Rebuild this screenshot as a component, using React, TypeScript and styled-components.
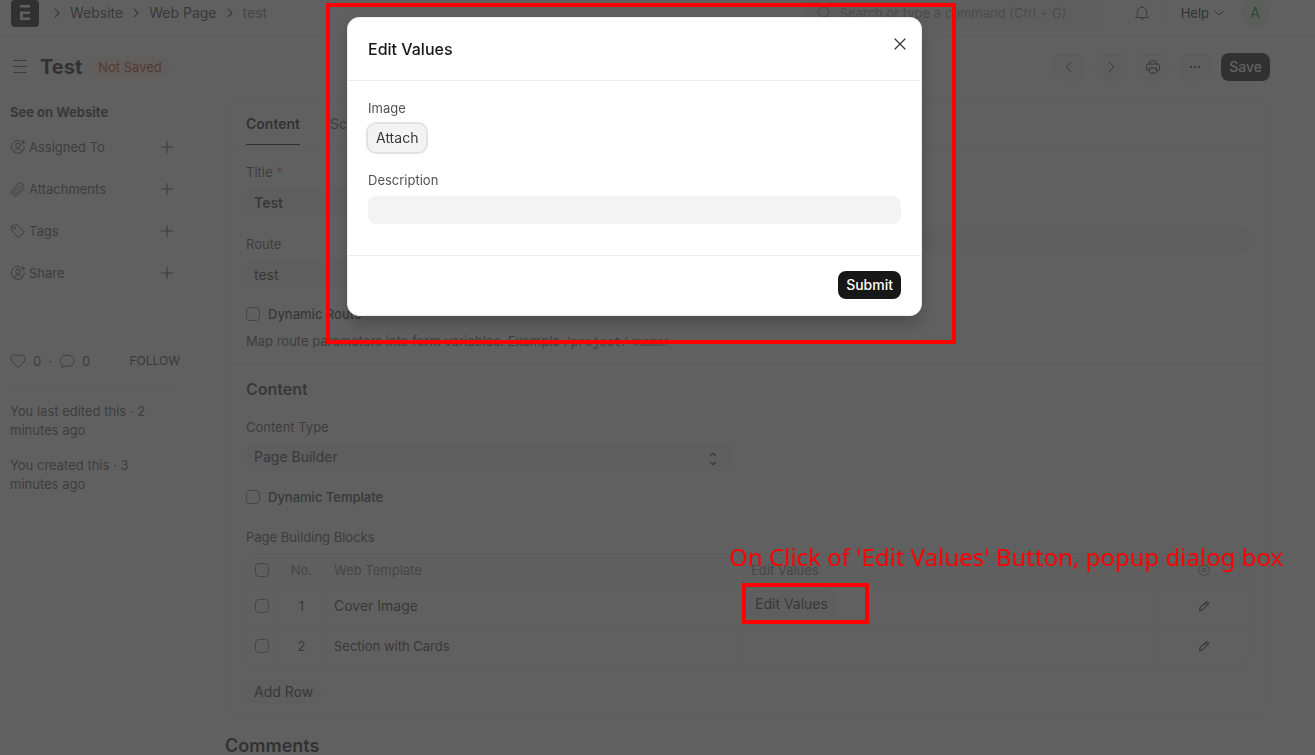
import React from "react";
import styled, { createGlobalStyle, css } from "styled-components";

const color = {
  ink: "#171717",
  text: "#383838",
  label: "#525252",
  muted: "#7c7c7c",
  faint: "#999999",
  line: "#ededed",
  control: "#f3f3f3",
  mark: "#ff0000",
};

const GlobalStyle = createGlobalStyle`
  *, *::before, *::after { box-sizing: border-box; }
  body {
    margin: 0;
    background: #ffffff;
    color: ${color.text};
    font-family: Inter, "Liberation Sans", sans-serif;
    font-size: 13px;
    line-height: 20px;
  }
  button, input, select { font: inherit; color: inherit; margin: 0; }
  button { border: 0; padding: 0; background: none; cursor: pointer; }
  a { color: inherit; text-decoration: none; }
  svg { display: block; flex: none; }
`;

/* ---------- icons ---------- */

type StrokeProps = { size?: number; width?: number; box?: number; children: React.ReactNode };

const Stroke = ({ size = 16, width = 1, box = 16, children }: StrokeProps) => (
  <svg
    width={size}
    height={size}
    viewBox={`0 0 ${box} ${box}`}
    fill="none"
    stroke="currentColor"
    strokeWidth={width}
    strokeLinecap="round"
    strokeLinejoin="round"
    aria-hidden="true"
  >
    {children}
  </svg>
);

const ChevronRight = () => (
  <Stroke size={12} box={12} width={1.2}>
    <path d="M4.2 2.200 8 6 4.200 9.800" />
  </Stroke>
);
const ChevronLeft = () => (
  <Stroke>
    <path d="M10.300 3 5.300 8l5 5" />
  </Stroke>
);
const ChevronNext = () => (
  <Stroke>
    <path d="m5.900 3 5 5-5 5" />
  </Stroke>
);
const ChevronDown = () => (
  <Stroke size={12} box={12}>
    <path d="M2 4.200 6 8l4-3.800" />
  </Stroke>
);
const SearchIcon = () => (
  <Stroke>
    <circle cx="7.600" cy="7" r="5.200" />
    <path d="m11.500 10.800 2.600 2.800" />
  </Stroke>
);
const BellIcon = () => (
  <Stroke>
    <path d="M8 1v1.200M3.300 7A4.700 4.800 0 0 1 12.700 7v3l1.700 2.600H1.600L3.300 10ZM6.200 13a1.900 1.900 0 0 0 3.600 0" />
  </Stroke>
);
const MenuIcon = () => (
  <Stroke>
    <path d="M1.500 1.500h13M1.500 7.500h13M1.500 13.500h13" />
  </Stroke>
);
const PrinterIcon = () => (
  <Stroke>
    <path d="M4.500 5V3.200A1.200 1.200 0 0 1 5.700 2h4.600a1.200 1.200 0 0 1 1.200 1.200V5M4.500 11.500H3A1.500 1.500 0 0 1 1.500 10V6.800A1.800 1.800 0 0 1 3.300 5h9.400a1.800 1.800 0 0 1 1.800 1.800V10a1.500 1.500 0 0 1-1.500 1.500h-1.500" />
    <path d="M4.500 9h7v3.800a1.200 1.200 0 0 1-1.200 1.200H5.700a1.200 1.200 0 0 1-1.200-1.200Z" />
  </Stroke>
);
const DotsIcon = () => (
  <svg width="16" height="16" viewBox="0 0 16 16" fill="currentColor" aria-hidden="true">
    <rect x="3" y="7" width="2" height="2" rx="0.500" />
    <rect x="7" y="7" width="2" height="2" rx="0.500" />
    <rect x="11" y="7" width="2" height="2" rx="0.500" />
  </svg>
);
const AssignIcon = () => (
  <Stroke>
    <path d="M10 1.800A6.500 6.500 0 1 0 14.300 7.600" />
    <circle cx="8" cy="6.500" r="2.300" />
    <path d="M3.800 12.800a4.400 4.400 0 0 1 8.400 0M13 1.300v4M11 3.300h4" />
  </Stroke>
);
const ClipIcon = () => (
  <Stroke>
    <path d="m14.300 7.400-6 6.200a3.800 3.800 0 0 1-5.500-5.300l5.700-5.900a2.700 2.700 0 0 1 4 3.700l-5.700 5.900a1.500 1.500 0 0 1-2.200-2L9.700 4.800" />
  </Stroke>
);
const TagIcon = () => (
  <Stroke>
    <path d="M1.800 3.900v3.300c0 .5.200 1 .5 1.300l5.400 5.400a1.300 1.300 0 0 0 1.900 0l4-4a1.300 1.300 0 0 0 0-1.900L8.200 2.600c-.4-.3-.8-.5-1.300-.5H3.600a1.800 1.800 0 0 0-1.800 1.800Z" />
    <circle cx="4.800" cy="5.200" r="0.700" />
  </Stroke>
);
const PlusIcon = () => (
  <Stroke size={14} box={14} width={1.2}>
    <path d="M7 1.500v11M1.500 7h11" />
  </Stroke>
);
const HeartIcon = () => (
  <Stroke>
    <path d="M8 14.300 1.700 8.200A3.900 3.900 0 0 1 7.200 2.700l.8.800.8-.8a3.900 3.900 0 0 1 5.500 5.500Z" />
  </Stroke>
);
const CommentIcon = () => (
  <Stroke>
    <path d="M8.200 2.100c4 0 7 2.400 7 5.600s-3 5.600-7 5.600c-.8 0-1.600-.1-2.300-.3-.8.600-1.900 1.100-3.300 1.200.5-.7.800-1.400.800-2.400C2 10.800 1.200 9.300 1.200 7.700c0-3.200 3-5.600 7-5.600Z" />
  </Stroke>
);
const UpDownIcon = () => (
  <Stroke width={1.3}>
    <path d="M5.500 4.500 8 2.500l2.500 2M5.500 11.500 8 13.500l2.500-2" />
  </Stroke>
);
const GearIcon = () => (
  <Stroke size={14}>
    <circle cx="8" cy="8" r="2" />
    <path d="M8 1.200 9.500 2.900 11.700 2.300 12.200 4.500 14.300 5.200 13.700 7.400 15 9.200 13.200 10.600 13 12.900 10.700 12.900 9.200 14.700 7.300 13.400 5.100 14 4.400 11.900 2.200 11.300 2.700 9.100 1.100 7.500 2.800 6 2.900 3.700 5.200 3.500 6.200 1.600Z" />
  </Stroke>
);
const PencilIcon = () => (
  <Stroke size={12} width={1.6}>
    <path d="M1.800 14.200 2.600 10.600 10.800 2.400a1.200 1.200 0 0 1 1.700 0l1.100 1.100a1.200 1.200 0 0 1 0 1.700l-8.200 8.200ZM9.400 3.800l2.800 2.800" />
  </Stroke>
);
const CloseIcon = () => (
  <Stroke width={1.3}>
    <path d="m3 3 10 10M13 3 3 13" />
  </Stroke>
);

/* ---------- top bar ---------- */

const Page = styled.div`
  min-height: 100vh;
`;

const TopBar = styled.header`
  display: flex;
  align-items: center;
  justify-content: space-between;
  height: 37px;
  padding: 0 46px 10px 11px;
  border-bottom: 1px solid ${color.line};
`;

const Crumbs = styled.nav`
  display: flex;
  align-items: center;
  gap: 7px;
  font-size: 14px;
  color: ${color.text};
`;

const Logo = styled.a`
  display: block;
  width: 28px;
  height: 27px;
  margin-right: 5px;
  border-radius: 4px;
  background: ${color.ink};
`;

const CurrentCrumb = styled.span`
  color: ${color.muted};
`;

const Tools = styled.div`
  display: flex;
  align-items: center;
`;

const SearchBox = styled.label`
  display: flex;
  align-items: center;
  gap: 8px;
  width: 300px;
  height: 26px;
  padding: 0 12px;
  border-radius: 8px;
  background: ${color.control};
  color: ${color.muted};

  input {
    flex: 1;
    min-width: 0;
    padding: 0;
    border: 0;
    background: none;
    outline: 0;
  }
  input::placeholder { color: ${color.faint}; opacity: 1; }
`;

const BellButton = styled.button`
  margin: 0 15px 0 30px;
  color: ${color.label};
`;

const HelpButton = styled.button`
  display: flex;
  align-items: center;
  gap: 4px;
  height: 24px;
  margin-right: 16px;
  padding-left: 15px;
  border-left: 1px solid ${color.line};
  color: ${color.ink};
`;

const Avatar = styled.span`
  display: grid;
  place-items: center;
  width: 28px;
  height: 28px;
  border-radius: 50%;
  background: #e4faeb;
  color: #16794c;
  font-size: 14px;
`;

/* ---------- page head ---------- */

const PageHead = styled.div`
  display: flex;
  align-items: center;
  justify-content: space-between;
  padding: 16px 45px 0 12px;
`;

const HeadGroup = styled.div<{ $gap: number }>`
  display: flex;
  align-items: center;
  gap: ${(p) => p.$gap}px;
`;

const PageTitle = styled.h1`
  margin: 0;
  color: ${color.ink};
  font-size: 20px;
  font-weight: 700;
  line-height: 28px;
`;

const Status = styled.span`
  padding: 0 8px;
  border-radius: 10px;
  background: #fff1e7;
  color: #bd3e0c;
`;

const solid = css`
  background: ${color.ink};
  color: #ffffff;
`;
const subtle = css`
  background: ${color.control};
  color: ${color.text};
`;

const Button = styled.button<{ $primary?: boolean; $small?: boolean; $focused?: boolean }>`
  display: inline-flex;
  align-items: center;
  justify-content: center;
  height: ${(p) => (p.$small ? 24 : 28)}px;
  padding: 0 8px;
  border-radius: 8px;
  font-size: 14px;
  font-weight: ${(p) => (p.$primary ? 500 : 400)};
  ${(p) => (p.$primary ? solid : subtle)}
  ${(p) => p.$focused && "box-shadow: 0 0 0 2px #e2e2e2;"}
`;

const MenuButton = styled.button`
  color: ${color.label};
`;

/* ---------- sidebar ---------- */

const Body = styled.div`
  display: flex;
  gap: 45px;
  padding: 21px 45px 0 10px;
`;

const Sidebar = styled.aside`
  flex: none;
  width: 170px;
  color: ${color.label};
`;

const SiteLink = styled.a`
  display: block;
  margin-bottom: 14px;
  color: ${color.text};
  font-weight: 700;
`;

const SideItem = styled.div`
  display: flex;
  align-items: center;
  gap: 3px;
  height: 22px;
  margin-bottom: 20px;

  button { margin-left: auto; padding-right: 6px; }
`;

const Social = styled.div`
  display: flex;
  align-items: center;
  gap: 7px;
  margin-top: 67px;
  padding-bottom: 14px;
  border-bottom: 1px solid ${color.line};

  > button:last-child { margin-left: auto; color: ${color.text}; font-size: 12px; }
`;

const Count = styled.button`
  display: flex;
  align-items: center;
  gap: 7px;
`;

const Activity = styled.p`
  width: 150px;
  margin: 16px 0;
  line-height: 19px;
`;

/* ---------- form ---------- */

const Main = styled.main`
  flex: 1;
  min-width: 0;
`;

const Card = styled.div`
  border: 1px solid ${color.line};
  border-radius: 12px;
`;

const Tabs = styled.div`
  display: flex;
  gap: 30px;
  height: 43px;
  padding: 0 20px;
  border-bottom: 1px solid ${color.line};
`;

const Tab = styled.button<{ $active?: boolean }>`
  height: 42px;
  border-bottom: 1px solid ${(p) => (p.$active ? color.ink : "transparent")};
  color: ${(p) => (p.$active ? color.ink : color.label)};
  font-size: 14px;
  font-weight: ${(p) => (p.$active ? 600 : 400)};
`;

const Section = styled.section`
  padding: 16px 20px 0;

  & + & { margin-top: 13px; border-top: 1px solid ${color.line}; }
`;

const Columns = styled.div`
  display: grid;
  grid-template-columns: 1fr 1fr;
  gap: 30px;
`;

const SideColumn = styled.div`
  padding-top: 64px;
`;

const SectionTitle = styled.h2`
  margin: 0 0 20px;
  color: ${color.text};
  font-size: 16px;
  font-weight: 600;
  line-height: 16px;
`;

const Field = styled.div`
  display: flex;
  flex-direction: column;
  gap: 6px;

  & + & { margin-top: 18px; }
`;

const Label = styled.label`
  color: ${color.label};
  line-height: 20px;
`;

const Required = styled.span`
  color: #c97070;
`;

const TextInput = styled.input<{ $bold?: boolean }>`
  width: 100%;
  height: 28px;
  padding: 0 8px;
  border: 0;
  border-radius: 8px;
  background: ${color.control};
  font-size: 14px !important;
  font-weight: ${(p) => (p.$bold ? 600 : 400)} !important;
`;

const SelectWrap = styled.div`
  position: relative;

  select {
    display: block;
    width: 100%;
    height: 28px;
    padding: 0 8px;
    border: 0;
    border-radius: 8px;
    background: ${color.control};
    font-size: 14px;
    appearance: none;
  }
  svg { position: absolute; top: 8px; right: 12px; pointer-events: none; }
`;

const Check = styled.input`
  appearance: none;
  flex: none;
  display: block;
  width: 14px;
  height: 14px;
  border: 1px solid ${color.muted};
  border-radius: 4px;
`;

const CheckLabel = styled.label`
  display: flex;
  align-items: center;
  gap: 8px;
  margin-top: 16px;
  color: ${color.text};
  font-weight: 500;
`;

const Hint = styled.p`
  margin: 7px 0 0;
  color: ${color.label};

  code { font-family: "Liberation Mono", monospace; font-size: 12px; line-height: 12px; }
`;

const GridLabel = styled.div`
  margin: 20px 0 6px;
  color: ${color.label};
`;

const Grid = styled.table`
  width: 100%;
  border: 1px solid ${color.line};
  border-radius: 10px;
  border-spacing: 0;
  table-layout: fixed;

  th, td {
    padding: 0 8px;
    border-left: 1px solid ${color.line};
    text-align: left;
    font-weight: 400;
  }
  th:first-child, td:first-child { border-left: 0; }
  th { height: 31px; color: ${color.muted}; background: #f8f8f8; }
  th:first-child { border-top-left-radius: 10px; }
  th:last-child { border-top-right-radius: 10px; }
  td { height: 40px; border-top: 1px solid ${color.line}; }
  col:nth-child(1) { width: 30px; }
  col:nth-child(2) { width: 48px; }
  col:nth-child(5) { width: 89px; }
  th:nth-child(2), td:nth-child(2) { text-align: center; }
  svg { margin: 0 auto; }
`;

const IconButton = styled.button`
  display: block;
  width: 100%;
`;

const EditingValue = styled.span`
  font-size: 14px;
`;

const AddRow = styled.div`
  display: flex;
  padding: 14px 0 8px;
`;

const Comments = styled.h2`
  margin: 24px 0 0;
  color: ${color.ink};
  font-size: 18px;
  font-weight: 600;
  line-height: 18px;
`;

/* ---------- dialog ---------- */

const Backdrop = styled.div`
  position: fixed;
  inset: 0;
  z-index: 1;
  display: flex;
  align-items: flex-start;
  justify-content: center;
  padding: 17px 46px 0 0;
  background: rgba(56, 56, 56, 0.8);
`;

const Dialog = styled.div`
  position: relative;
  width: 575px;
  border: 1px solid ${color.line};
  border-radius: 12px;
  background: #ffffff;
  box-shadow: 0 8px 16px rgba(0, 0, 0, 0.2);
`;

const DialogHead = styled.div`
  display: flex;
  justify-content: space-between;
  height: 63px;
  padding: 18px 13px 0 20px;
  border-bottom: 1px solid ${color.line};

  h2 { margin: 0; padding-top: 3px; color: ${color.ink}; font-size: 16px; font-weight: 500; }
  button { height: 16px; }
`;

const DialogBody = styled.div`
  display: flex;
  flex-direction: column;
  align-items: flex-start;
  gap: 6px;
  padding: 17px 20px 31px;
  border-bottom: 1px solid ${color.line};

  button + label { margin-top: 12px; }
`;

const DialogFoot = styled.div`
  display: flex;
  justify-content: flex-end;
  padding: 15px 20px 16px;
`;

/* ---------- red call-outs drawn over the screen ---------- */

const DialogMark = styled.span`
  position: absolute;
  inset: -15px -35px -29px -22px;
  border: 4px solid ${color.mark};
  pointer-events: none;
`;

const MarkedCell = styled.td`
  position: relative;
`;

const CellMark = styled.span`
  position: absolute;
  z-index: 2;
  top: -3px;
  left: -1px;
  width: 127px;
  height: 41px;
  border: 4px solid ${color.mark};
  pointer-events: none;
`;

const NoteCell = styled.th`
  position: relative;
`;

const Note = styled.span`
  position: absolute;
  z-index: 2;
  top: -15px;
  left: -14px;
  color: ${color.mark};
  font-family: "Noto Sans", sans-serif;
  font-size: 24px;
  line-height: 36px;
  white-space: nowrap;
`;

const EditCellButton = styled(Button)`
  margin: -4px 0 0 -4px;
`;

const sideItems = [
  { label: "Assigned To", icon: <AssignIcon /> },
  { label: "Attachments", icon: <ClipIcon /> },
  { label: "Tags", icon: <TagIcon /> },
  { label: "Share", icon: <AssignIcon /> },
];

export default function App() {
  return (
    <>
      <GlobalStyle />
      <Page>
        <TopBar>
          <Crumbs aria-label="Breadcrumb">
            <Logo href="#" aria-label="Home">
              <svg width="28" height="27" viewBox="0 0 28 27" aria-hidden="true">
                <path d="M9 5h10v2.500H9zM9 11.500h10v2.500h-7v3.500h7V20H9z" fill="#ffffff" />
              </svg>
            </Logo>
            <ChevronRight />
            <a href="#">Website</a>
            <ChevronRight />
            <a href="#">Web Page</a>
            <ChevronRight />
            <CurrentCrumb>test</CurrentCrumb>
          </Crumbs>
          <Tools>
            <SearchBox>
              <SearchIcon />
              <input placeholder="Search or type a command (Ctrl + G)" aria-label="Search" />
            </SearchBox>
            <BellButton aria-label="Notifications">
              <BellIcon />
            </BellButton>
            <HelpButton>
              Help
              <ChevronDown />
            </HelpButton>
            <Avatar>A</Avatar>
          </Tools>
        </TopBar>

        <PageHead>
          <HeadGroup $gap={12}>
            <MenuButton aria-label="Toggle sidebar">
              <MenuIcon />
            </MenuButton>
            <HeadGroup $gap={8}>
              <PageTitle>Test</PageTitle>
              <Status>Not Saved</Status>
            </HeadGroup>
          </HeadGroup>
          <HeadGroup $gap={10}>
            <Button aria-label="Previous"><ChevronLeft /></Button>
            <Button aria-label="Next"><ChevronNext /></Button>
            <Button aria-label="Print"><PrinterIcon /></Button>
            <Button aria-label="More"><DotsIcon /></Button>
            <Button $primary>Save</Button>
          </HeadGroup>
        </PageHead>

        <Body>
          <Sidebar>
            <SiteLink href="#">See on Website</SiteLink>
            {sideItems.map((item) => (
              <SideItem key={item.label}>
                {item.icon}
                {item.label}
                <button aria-label={`Add ${item.label}`}>
                  <PlusIcon />
                </button>
              </SideItem>
            ))}
            <Social>
              <Count aria-label="Likes"><HeartIcon />0</Count>
              <span>·</span>
              <Count aria-label="Comments"><CommentIcon />0</Count>
              <button>FOLLOW</button>
            </Social>
            <Activity>You last edited this · 2 minutes ago</Activity>
            <Activity>You created this · 3 minutes ago</Activity>
          </Sidebar>

          <Main>
            <Card>
              <Tabs>
                <Tab $active>Content</Tab>
                <Tab>Script</Tab>
              </Tabs>
              <Section>
                <Columns>
                  <div>
                    <Field>
                      <Label htmlFor="title">Title <Required>*</Required></Label>
                      <TextInput id="title" defaultValue="Test" $bold />
                    </Field>
                    <Field>
                      <Label htmlFor="route">Route</Label>
                      <TextInput id="route" defaultValue="test" />
                    </Field>
                    <CheckLabel>
                      <Check type="checkbox" />
                      Dynamic Route
                    </CheckLabel>
                    <Hint>
                      Map route parameters into form variables. Example <code>/project/&lt;name&gt;</code>
                    </Hint>
                  </div>
                  <SideColumn>
                    <TextInput aria-label="Module" />
                  </SideColumn>
                </Columns>
              </Section>
              <Section>
                <SectionTitle>Content</SectionTitle>
                <Columns>
                  <div>
                    <Field>
                      <Label htmlFor="type">Content Type</Label>
                      <SelectWrap>
                        <select id="type" defaultValue="Page Builder">
                          <option>Page Builder</option>
                        </select>
                        <UpDownIcon />
                      </SelectWrap>
                    </Field>
                    <CheckLabel>
                      <Check type="checkbox" />
                      Dynamic Template
                    </CheckLabel>
                  </div>
                </Columns>
                <GridLabel id="blocks">Page Building Blocks</GridLabel>
                <Grid aria-labelledby="blocks">
                  <colgroup>
                    <col />
                    <col />
                    <col />
                    <col />
                    <col />
                  </colgroup>
                  <thead>
                    <tr>
                      <th><Check type="checkbox" aria-label="Select all rows" /></th>
                      <th>No.</th>
                      <th>Web Template</th>
                      <NoteCell>
                        Edit Values
                        <Note>On Click of 'Edit Values' Button, popup dialog box</Note>
                      </NoteCell>
                      <th>
                        <IconButton aria-label="Configure columns"><GearIcon /></IconButton>
                      </th>
                    </tr>
                  </thead>
                  <tbody>
                    <tr>
                      <td><Check type="checkbox" aria-label="Select row 1" /></td>
                      <td>1</td>
                      <td><EditingValue>Cover Image</EditingValue></td>
                      <MarkedCell>
                        <EditCellButton>Edit Values</EditCellButton>
                        <CellMark />
                      </MarkedCell>
                      <td><IconButton aria-label="Edit row 1"><PencilIcon /></IconButton></td>
                    </tr>
                    <tr>
                      <td><Check type="checkbox" aria-label="Select row 2" /></td>
                      <td>2</td>
                      <td>Section with Cards</td>
                      <td />
                      <td><IconButton aria-label="Edit row 2"><PencilIcon /></IconButton></td>
                    </tr>
                  </tbody>
                </Grid>
                <AddRow>
                  <Button $small>Add Row</Button>
                </AddRow>
              </Section>
            </Card>
            <Comments>Comments</Comments>
          </Main>
        </Body>
      </Page>

      <Backdrop>
        <Dialog role="dialog" aria-labelledby="dialog-title">
          <DialogHead>
            <h2 id="dialog-title">Edit Values</h2>
            <button aria-label="Close"><CloseIcon /></button>
          </DialogHead>
          <DialogBody>
            <Label htmlFor="image">Image</Label>
            <Button id="image" $focused>Attach</Button>
            <Label htmlFor="description">Description</Label>
            <TextInput id="description" />
          </DialogBody>
          <DialogFoot>
            <Button $primary>Submit</Button>
          </DialogFoot>
          <DialogMark />
        </Dialog>
      </Backdrop>
    </>
  );
}
